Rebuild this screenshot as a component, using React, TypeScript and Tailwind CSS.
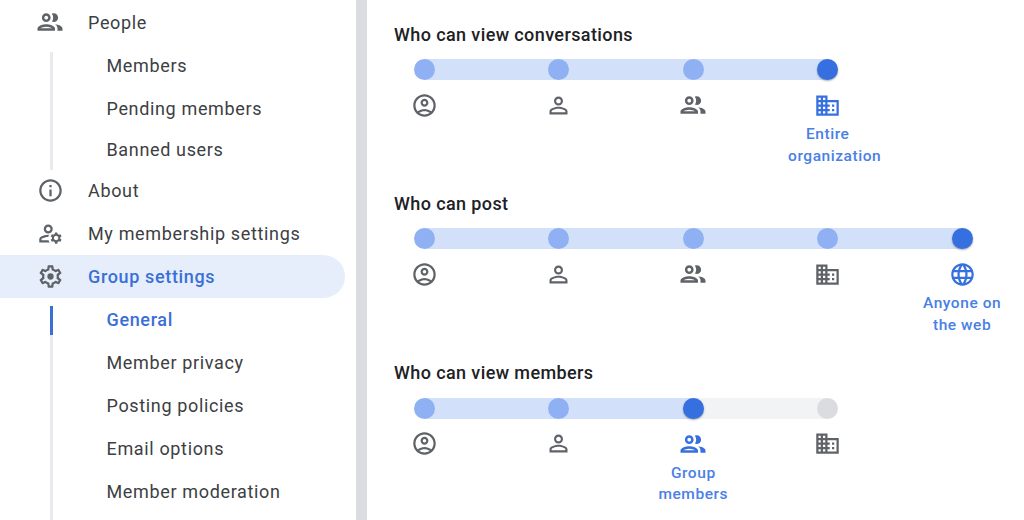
import type { ReactNode } from 'react';

const PATHS = {
  people:
    'M9 13.75c-2.34 0-7 1.17-7 3.5V19h14v-1.75c0-2.33-4.66-3.5-7-3.5zM4.34 17c.84-.58 2.87-1.25 4.66-1.25s3.82.67 4.66 1.25H4.34zM9 12c1.93 0 3.5-1.57 3.5-3.5S10.93 5 9 5 5.5 6.57 5.5 8.5 7.07 12 9 12zm0-5c.83 0 1.5.67 1.5 1.5S9.83 10 9 10s-1.5-.67-1.5-1.5S8.17 7 9 7zm7.04 6.81c1.16.84 1.96 1.96 1.96 3.44V19h4v-1.75c0-2.02-3.5-3.17-5.96-3.44zM15 12c1.93 0 3.5-1.57 3.5-3.5S16.93 5 15 5c-.54 0-1.04.13-1.5.35.63.89 1 1.98 1 3.15s-.37 2.26-1 3.15c.46.22.96.35 1.5.35z',
  person:
    'M12 5.9c1.16 0 2.1.94 2.1 2.1s-.94 2.1-2.1 2.1S9.9 9.16 9.9 8s.94-2.1 2.1-2.1m0 9c2.97 0 6.1 1.46 6.1 2.1v1.1H5.9V17c0-.64 3.13-2.1 6.1-2.1M12 4C9.79 4 8 5.79 8 8s1.79 4 4 4 4-1.79 4-4-1.79-4-4-4zm0 9c-2.67 0-8 1.34-8 4v3h16v-3c0-2.66-5.33-4-8-4z',
  account:
    'M12 2C6.48 2 2 6.48 2 12s4.48 10 10 10 10-4.48 10-10S17.52 2 12 2zM7.35 18.5C8.66 17.56 10.26 17 12 17s3.34.56 4.65 1.5c-1.31.94-2.91 1.5-4.65 1.5s-3.34-.56-4.65-1.5zm10.79-1.38C16.45 15.8 14.32 15 12 15s-4.45.8-6.14 2.12C4.7 15.73 4 13.95 4 12c0-4.42 3.58-8 8-8s8 3.58 8 8c0 1.95-.7 3.73-1.86 5.12zM12 6c-1.93 0-3.5 1.57-3.5 3.5S10.07 13 12 13s3.5-1.57 3.5-3.5S13.93 6 12 6zm0 5c-.83 0-1.5-.67-1.5-1.5S11.17 8 12 8s1.5.67 1.5 1.5S12.83 11 12 11z',
  domain:
    'M12 7V3H2v18h20V7H12zM6 19H4v-2h2v2zm0-4H4v-2h2v2zm0-4H4V9h2v2zm0-4H4V5h2v2zm4 12H8v-2h2v2zm0-4H8v-2h2v2zm0-4H8V9h2v2zm0-4H8V5h2v2zm10 12h-8v-2h2v-2h-2v-2h2v-2h-2V9h8v10zm-2-8h-2v2h2v-2zm0 4h-2v2h2v-2z',
  web: 'M11.99 2C6.47 2 2 6.48 2 12s4.47 10 9.99 10C17.52 22 22 17.52 22 12S17.52 2 11.99 2zm6.93 6h-2.95c-.32-1.25-.78-2.45-1.38-3.56 1.84.63 3.37 1.91 4.33 3.56zM12 4.04c.83 1.2 1.48 2.53 1.91 3.96h-3.82c.43-1.43 1.08-2.76 1.91-3.96zM4.26 14C4.1 13.36 4 12.69 4 12s.1-1.36.26-2h3.38c-.08.66-.14 1.32-.14 2 0 .68.06 1.34.14 2H4.26zm.82 2h2.95c.32 1.25.78 2.45 1.38 3.56-1.84-.63-3.37-1.9-4.33-3.56zm2.95-8H5.08c.96-1.66 2.49-2.93 4.33-3.56C8.81 5.55 8.35 6.75 8.03 8zM12 19.96c-.83-1.2-1.48-2.53-1.91-3.96h3.82c-.43 1.43-1.08 2.76-1.91 3.96zM14.34 14H9.66c-.09-.66-.16-1.32-.16-2 0-.68.07-1.35.16-2h4.68c.09.65.16 1.32.16 2 0 .68-.07 1.34-.16 2zm.25 5.56c.6-1.11 1.06-2.31 1.38-3.56h2.95c-.96 1.65-2.49 2.93-4.33 3.56zM16.36 14c.08-.66.14-1.32.14-2 0-.68-.06-1.34-.14-2h3.38c.16.64.26 1.31.26 2s-.1 1.36-.26 2h-3.38z',
  info: 'M11 7h2v2h-2zm0 4h2v6h-2zm1-9C6.48 2 2 6.48 2 12s4.48 10 10 10 10-4.48 10-10S17.52 2 12 2zm0 18c-4.41 0-8-3.59-8-8s3.59-8 8-8 8 3.59 8 8-3.59 8-8 8z',
  manage:
    'M4 18v-.65c0-.34.16-.66.41-.81C6.1 15.53 8.03 15 10 15c.03 0 .05 0 .08.01.1-.7.3-1.37.59-1.98-.22-.02-.44-.03-.67-.03-2.42 0-4.68.67-6.61 1.82-.88.52-1.39 1.5-1.39 2.53V20h9.26c-.42-.6-.75-1.28-.97-2H4zM10 12c2.21 0 4-1.79 4-4s-1.79-4-4-4-4 1.79-4 4 1.79 4 4 4zm0-6c1.1 0 2 .9 2 2s-.9 2-2 2-2-.9-2-2 .9-2 2-2zM20.75 16c0-.22-.03-.42-.06-.63l1.14-1.01-1-1.73-1.45.49c-.32-.27-.68-.48-1.08-.63L18 11h-2l-.3 1.49c-.4.15-.76.36-1.08.63l-1.45-.49-1 1.73 1.14 1.01c-.03.21-.06.41-.06.63s.03.42.06.63l-1.14 1.01 1 1.73 1.45-.49c.32.27.68.48 1.08.63L16 21h2l.3-1.49c.4-.15.76-.36 1.08-.63l1.45.49 1-1.73-1.14-1.01c.03-.21.06-.41.06-.63zM17 18c-1.1 0-2-.9-2-2s.9-2 2-2 2 .9 2 2-.9 2-2 2z',
  settings:
    'M19.43 12.98c.04-.32.07-.64.07-.98 0-.34-.03-.66-.07-.98l2.11-1.65c.19-.15.24-.42.12-.64l-2-3.46c-.09-.16-.26-.25-.44-.25-.06 0-.12.01-.17.03l-2.49 1c-.52-.4-1.08-.73-1.69-.98l-.38-2.65C14.46 2.18 14.25 2 14 2h-4c-.25 0-.46.18-.49.42l-.38 2.65c-.61.25-1.17.59-1.69.98l-2.49-1c-.06-.02-.12-.03-.18-.03-.17 0-.34.09-.43.25l-2 3.46c-.13.22-.07.49.12.64l2.11 1.65c-.04.32-.07.65-.07.98 0 .33.03.66.07.98l-2.11 1.65c-.19.15-.24.42-.12.64l2 3.46c.09.16.26.25.44.25.06 0 .12-.01.17-.03l2.49-1c.52.4 1.08.73 1.69.98l.38 2.65c.03.24.24.42.49.42h4c.25 0 .46-.18.49-.42l.38-2.65c.61-.25 1.17-.59 1.69-.98l2.49 1c.06.02.12.03.18.03.17 0 .34-.09.43-.25l2-3.46c.12-.22.07-.49-.12-.64l-2.11-1.65zm-1.98-1.71c.04.31.05.52.05.73 0 .21-.02.43-.05.73l-.14 1.13.89.7 1.08.84-.7 1.21-1.27-.51-1.04-.42-.9.68c-.43.32-.84.56-1.25.73l-1.06.43-.16 1.13-.2 1.35h-1.4l-.19-1.35-.16-1.13-1.06-.43c-.43-.18-.83-.41-1.23-.71l-.91-.7-1.06.43-1.27.51-.7-1.21 1.08-.84.89-.7-.14-1.13c-.03-.31-.05-.54-.05-.74s.02-.43.05-.73l.14-1.13-.89-.7-1.08-.84.7-1.21 1.27.51 1.04.42.9-.68c.43-.32.84-.56 1.25-.73l1.06-.43.16-1.13.2-1.35h1.39l.19 1.35.16 1.13 1.06.43c.43.18.83.41 1.23.71l.91.7 1.06-.43 1.27-.51.7 1.21-1.07.85-.89.7.14 1.13zM12 9.2a2.8 2.8 0 100 5.6 2.8 2.8 0 000-5.6z',
};

type IconName = keyof typeof PATHS;

const Icon = ({ name, className }: { name: IconName; className: string }) => (
  <span className="flex h-[27px] w-[27px] shrink-0 items-center justify-center">
    <svg
      viewBox="0 0 24 24"
      className={`shrink-0 fill-current ${name === 'people' ? 'h-[30px] w-[30px]' : 'h-[27px] w-[27px]'} ${className}`}
    >
      <path d={PATHS[name]} />
    </svg>
  </span>
);

const NavItem = ({
  icon,
  label,
  height,
  active,
}: {
  icon: IconName;
  label: string;
  height: string;
  active?: boolean;
}) => (
  <div
    className={`flex items-center gap-[24.5px] pl-[36.5px] text-[18px] tracking-[0.65px] ${height} ${
      active ? 'mr-[11px] rounded-r-full bg-[#e6eefc] font-medium text-[#3a6fd8]' : 'text-[#3c4043]'
    }`}
  >
    <Icon name={icon} className="text-[#5f6368]" />
    <span>{label}</span>
  </div>
);

const SubItem = ({ height, active, children }: { height: string; active?: boolean; children: ReactNode }) => (
  <div
    className={`flex items-center text-[18px] tracking-[0.65px] ${height} ${
      active ? 'font-medium text-[#3a6fd8]' : 'text-[#3c4043]'
    }`}
  >
    {children}
  </div>
);

const Sidebar = () => (
  <nav className="flex h-full w-[356px] shrink-0 flex-col pt-[0.5px]">
    <NavItem icon="people" label="People" height="h-[43px]" />
    <div className="flex">
      <div className="ml-[50px] mt-[8.5px] w-[2.5px] bg-[#e8eaed]" />
      <div className="ml-[54px]">
        <SubItem height="h-[43px]">Members</SubItem>
        <SubItem height="h-[43px]">Pending members</SubItem>
        <SubItem height="h-[40px]">Banned users</SubItem>
      </div>
    </div>
    <NavItem icon="info" label="About" height="h-[42px]" />
    <NavItem icon="manage" label="My membership settings" height="h-[43px]" />
    <NavItem icon="settings" label="Group settings" height="h-[43px]" active />
    <div className="flex flex-1">
      <div className="ml-[50px] mt-[8px] flex w-[2.5px] flex-col bg-[#e8eaed]">
        <div className="h-[29px] bg-[#3a6fd8]" />
      </div>
      <div className="ml-[54px]">
        <SubItem height="h-[43px]" active>
          General
        </SubItem>
        <SubItem height="h-[43px]">Member privacy</SubItem>
        <SubItem height="h-[43px]">Posting policies</SubItem>
        <SubItem height="h-[43px]">Email options</SubItem>
        <SubItem height="h-[43px]">Member moderation</SubItem>
      </div>
    </div>
  </nav>
);

interface Stop {
  icon: IconName;
  label: string[];
}

const STOPS: Stop[] = [
  { icon: 'account', label: [] },
  { icon: 'person', label: [] },
  { icon: 'people', label: ['Group', 'members'] },
  { icon: 'domain', label: ['Entire', 'organization'] },
  { icon: 'web', label: ['Anyone on', 'the web'] },
];

const SliderSetting = ({
  title,
  count,
  selected,
}: {
  title: string;
  count: number;
  selected: number;
}) => {
  const stops = STOPS.slice(0, count);
  return (
    <section className="h-[169.4px]">
      <h2 className="h-[24px] text-[18px] leading-[24px] font-medium tracking-[0.4px] text-[#202124]">{title}</h2>
      <div className="ml-[20px] mt-[12.5px] flex h-[21px]">
        {stops.map((stop, i) => (
          <div key={stop.icon} className="flex">
            {i > 0 && (
              <div
                className={`-mx-[10.5px] h-[21px] w-[134.4px] ${
                  i <= selected ? 'bg-[#d2e0fa]' : 'bg-[#f1f3f4]'
                }`}
              />
            )}
            <div
              className={`relative h-[21px] w-[21px] rounded-full ${
                i === selected
                  ? 'bg-[#3670e0] shadow-[0_1px_2px_rgba(60,64,67,0.45)]'
                  : i < selected
                    ? 'bg-[#8fb0f3]'
                    : 'bg-[#dadce0]'
              }`}
            />
          </div>
        ))}
      </div>
      <div className="-ml-[36.7px] mt-[11.5px] flex">
        {stops.map((stop, i) => (
          <div key={stop.icon} className="flex w-[134.4px] flex-col items-center">
            <Icon name={stop.icon} className={i === selected ? 'text-[#3670e0]' : 'text-[#5f6368]'} />
            {i === selected && (
              <div className="mt-[5.5px] text-center text-[15.5px] leading-[21.5px] tracking-[0.55px] text-[#4a7fe6] [font-weight:500]">
                {stop.label.map((line) => (
                  <div key={line} className={line === 'organization' ? 'ml-[14px]' : ''}>
                    {line}
                  </div>
                ))}
              </div>
            )}
          </div>
        ))}
      </div>
    </section>
  );
};

export default function App() {
  return (
    <div className="flex h-[520px] w-[1024px] overflow-hidden bg-white font-['Roboto',sans-serif]">
      <Sidebar />
      <div className="h-full w-[11px] shrink-0 bg-[#dadce0]" />
      <main className="flex-1 pl-[27px] pt-[22.5px]">
        <SliderSetting title="Who can view conversations" count={4} selected={3} />
        <SliderSetting title="Who can post" count={5} selected={4} />
        <SliderSetting title="Who can view members" count={4} selected={2} />
      </main>
    </div>
  );
}
